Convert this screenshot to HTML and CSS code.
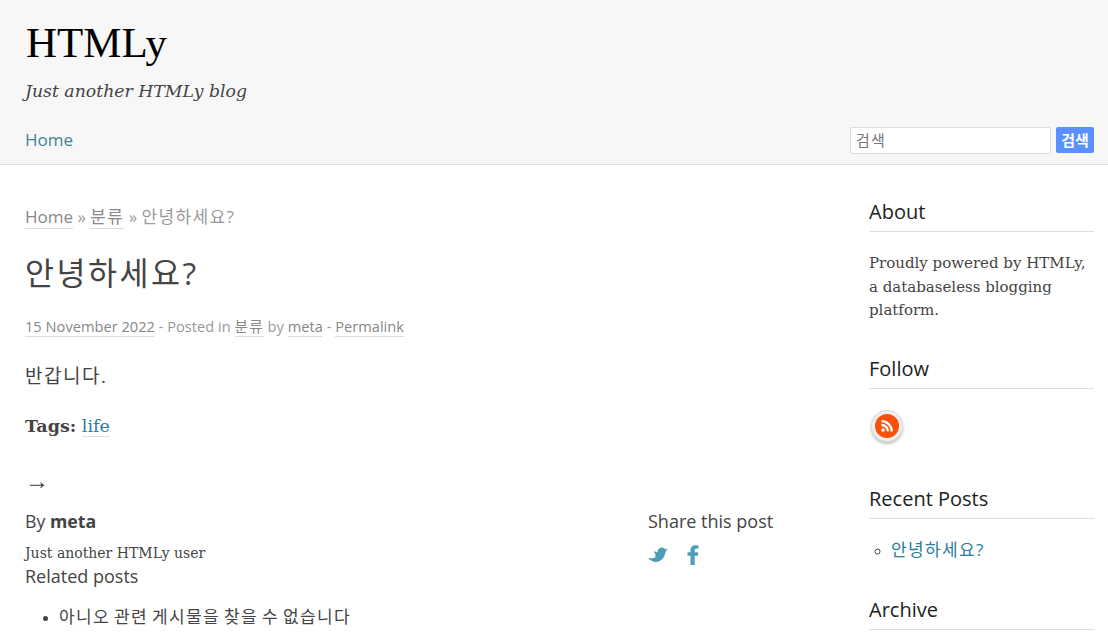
FILE: index.html
```html
<!DOCTYPE html>
<html lang="ko">
<head>
    <meta charset="UTF-8">
    <meta name="viewport" content="width=device-width, initial-scale=1.0">
    <title>안녕하세요? - HTMLy</title>
    <link rel="stylesheet" href="styles.css">
</head>
<body>
    <header class="site-header">
        <h1 class="site-title">HTMLy</h1>
        <p class="site-tagline">Just another HTMLy blog</p>
        <nav class="site-nav">
            <a class="nav-link" href="#">Home</a>
            <form class="search-form">
                <input class="search-input" type="text" placeholder="검색">
                <button class="search-btn" type="button">검색</button>
            </form>
        </nav>
    </header>

    <div class="page">
        <main class="content">
            <div class="breadcrumb"><a href="#">Home</a> » <a class="ko" href="#">분류</a> » <span class="ko">안녕하세요?</span></div>
            <h2 class="post-title ko">안녕하세요?</h2>
            <div class="post-meta"><a href="#">15 November 2022</a> - Posted in <a class="ko" href="#">분류</a> by <a href="#">meta</a> - <a href="#">Permalink</a></div>
            <p class="post-body ko">반갑니다.</p>
            <p class="post-tags"><strong>Tags:</strong> <a href="#">life</a></p>
            <div class="post-arrow">→</div>
            <div class="post-footer">
                <div class="author">
                    <div class="author-name">By <strong>meta</strong></div>
                    <div class="author-bio">Just another HTMLy user</div>
                    <div class="related-title">Related posts</div>
                </div>
                <div class="share">
                    <div class="share-title">Share this post</div>
                    <div class="share-icons">
                        <svg width="20" height="16" viewBox="0 0 20 16"><path fill="#4d9db8" d="M20 1.500L17.500 2.500C16.500.8 14.500 0 12.500.8 10.500 1.600 9.500 3.500 9.500 5 9 5.500 7.500 5 6 4c0 2 1 3 2 3.800-1.500.8-1 1.700 0 2.200-2 1.500-5 1.500-8 1 3 3.500 7.500 5 11.500 3s5.500-5.500 6-9z"/></svg>
                        <svg width="12" height="20" viewBox="0 0 12 20"><path fill="#4d9db8" d="M3.500 20V10.800H.5V7.300h3V5C3.500 2 5.500.2 8.300.2c1.300 0 2.500.1 3.200.2v3.200H9.600c-1.400 0-1.900.7-1.900 1.900v1.800h3.600l-.5 3.500H7.700V20z"/></svg>
                    </div>
                </div>
            </div>
            <ul class="related-list">
                <li class="ko">아니오 관련 게시물을 찾을 수 없습니다</li>
            </ul>
        </main>

        <aside class="sidebar">
            <section class="widget">
                <h3 class="widget-title">About</h3>
                <p class="about-text">Proudly powered by HTMLy, a databaseless blogging platform.</p>
            </section>
            <section class="widget widget-follow">
                <h3 class="widget-title">Follow</h3>
                <div class="rss-badge">
                    <svg width="12" height="12" viewBox="0 0 12 12"><circle cx="2" cy="10" r="1.800" fill="#fff"/><path fill="none" stroke="#fff" stroke-width="2.300" d="M.5 5a6.500 6.500 0 0 1 6.500 6.500M.5 1.200a10.300 10.300 0 0 1 10.300 10.300"/></svg>
                </div>
            </section>
            <section class="widget">
                <h3 class="widget-title">Recent Posts</h3>
                <ul class="recent-list">
                    <li><a class="ko" href="#">안녕하세요?</a></li>
                </ul>
            </section>
            <section class="widget">
                <h3 class="widget-title">Archive</h3>
            </section>
        </aside>
    </div>
</body>
</html>
```

FILE: styles.css
```css
html {
    overflow: hidden;
}

body {
    margin: 0;
    height: 640px;
    overflow: hidden;
    color: #444;
    background: #fff;
    font-family: "Open Sans", "Noto Sans CJK KR", sans-serif;
    font-size: 17px;
}

a {
    color: #2a7d9c;
    text-decoration: none;
}

/* hangul is set a bit wider in the original */
.ko {
    letter-spacing: 0.08em;
}

.site-header {
    height: 164px;
    padding: 0 14px 0 25px;
    background: #f7f7f7;
    border-bottom: 1px solid #ddd;
}

.site-title {
    margin: 0 0 0 1px;
    padding-top: 18px;
    font-family: "Liberation Serif", serif;
    font-size: 43px;
    line-height: 50px;
    font-weight: 400;
    color: #000;
}

.site-tagline {
    margin: 10px 0 0;
    font-family: "DejaVu Serif", serif;
    font-style: italic;
    font-size: 17.300px;
    line-height: 26px;
}

.site-nav {
    display: flex;
    justify-content: space-between;
    align-items: center;
    margin-top: 23px;
}

.nav-link {
    margin-bottom: 2px;
    color: #3d8597;
    font-size: 17px;
}

.search-form {
    display: flex;
    gap: 5px;
}

.search-input {
    width: 201px;
    height: 27px;
    box-sizing: border-box;
    padding: 0 5px 2px;
    background: #fff;
    border: 1px solid #ddd;
    border-radius: 2px;
    font-family: "Noto Sans CJK KR", sans-serif;
    font-size: 15px;
    letter-spacing: 0.08em;
}

.search-input::placeholder {
    color: #777;
}

.search-btn {
    width: 38px;
    height: 26px;
    padding: 0 0 2px;
    background: #5a90ff;
    border: 0;
    border-radius: 2px;
    color: #fff;
    font-family: "Noto Sans CJK KR", sans-serif;
    font-size: 15px;
    font-weight: 700;
}

.page {
    display: flex;
    padding: 0 14px 0 25px;
}

.content {
    width: 844px;
    flex: none;
    padding-top: 39px;
    padding-right: 30px;
    box-sizing: border-box;
}

.breadcrumb {
    color: #999;
    font-size: 17px;
    line-height: 26px;
}

.breadcrumb a,
.post-meta a {
    color: #888;
    border-bottom: 1px solid #ddd;
}

.post-title {
    margin: 21px 0 0;
    font-size: 31.500px;
    line-height: 44px;
    font-weight: 400;
    color: #444;
}

.post-meta {
    margin-top: 19px;
    color: #999;
    font-size: 14.650px;
    line-height: 24px;
}

.post-body {
    margin: 21px 0 0;
    font-size: 19px;
    line-height: 34px;
}

.post-tags {
    margin: 20px 0 0;
    font-family: "DejaVu Serif", serif;
    font-size: 17.500px;
    line-height: 26px;
}

.post-tags a {
    border-bottom: 1px solid #ddd;
}

.post-arrow {
    margin-top: 27px;
    font-family: "Liberation Serif", serif;
    font-size: 24px;
    line-height: 30px;
}

.post-footer {
    display: flex;
    margin-top: 12px;
}

.author {
    width: 623px;
    flex: none;
}

.author-name {
    font-size: 17.700px;
    line-height: 26px;
}

.author-bio {
    margin-top: 10px;
    font-family: "DejaVu Serif", serif;
    font-size: 14px;
    line-height: 18px;
}

.related-title {
    margin-top: 1px;
    line-height: 26px;
    font-size: 18px;
}

.share-title {
    font-size: 18px;
    line-height: 26px;
}

.share-icons {
    display: flex;
    align-items: center;
    gap: 19px;
    margin-top: 11px;
}

.related-list {
    margin: 15px 0 0;
    padding-left: 34px;
    font-size: 17px;
    line-height: 26px;
    word-spacing: -1.800px;
}

.related-list li::marker,
.recent-list li::marker {
    font-size: 13px;
}

.sidebar {
    width: 225px;
    flex: none;
    padding-top: 32px;
}

.widget {
    margin-bottom: 33px;
}

.widget-follow {
    margin-bottom: 46px;
}

.widget-title {
    margin: 0;
    padding-bottom: 4px;
    border-bottom: 1px solid #ddd;
    font-size: 20px;
    line-height: 30px;
    font-weight: 400;
    color: #222;
}

.about-text {
    margin: 20px 0 -1.500px;
    font-family: "DejaVu Serif", serif;
    font-size: 15px;
    line-height: 23.500px;
}

.rss-badge {
    display: flex;
    align-items: center;
    justify-content: center;
    width: 24px;
    height: 24px;
    margin: 25px 0 0 6px;
    background: #f9500a;
    border-radius: 50%;
    box-shadow: 0 0 0 3px #f0f0f0, 0 0 0 4px #ddd, 0 2px 3px 4px #c4c4c4;
}

.recent-list {
    margin: 18px 0 0;
    padding-left: 22px;
    list-style: circle;
    font-size: 17px;
    line-height: 25px;
}
```
